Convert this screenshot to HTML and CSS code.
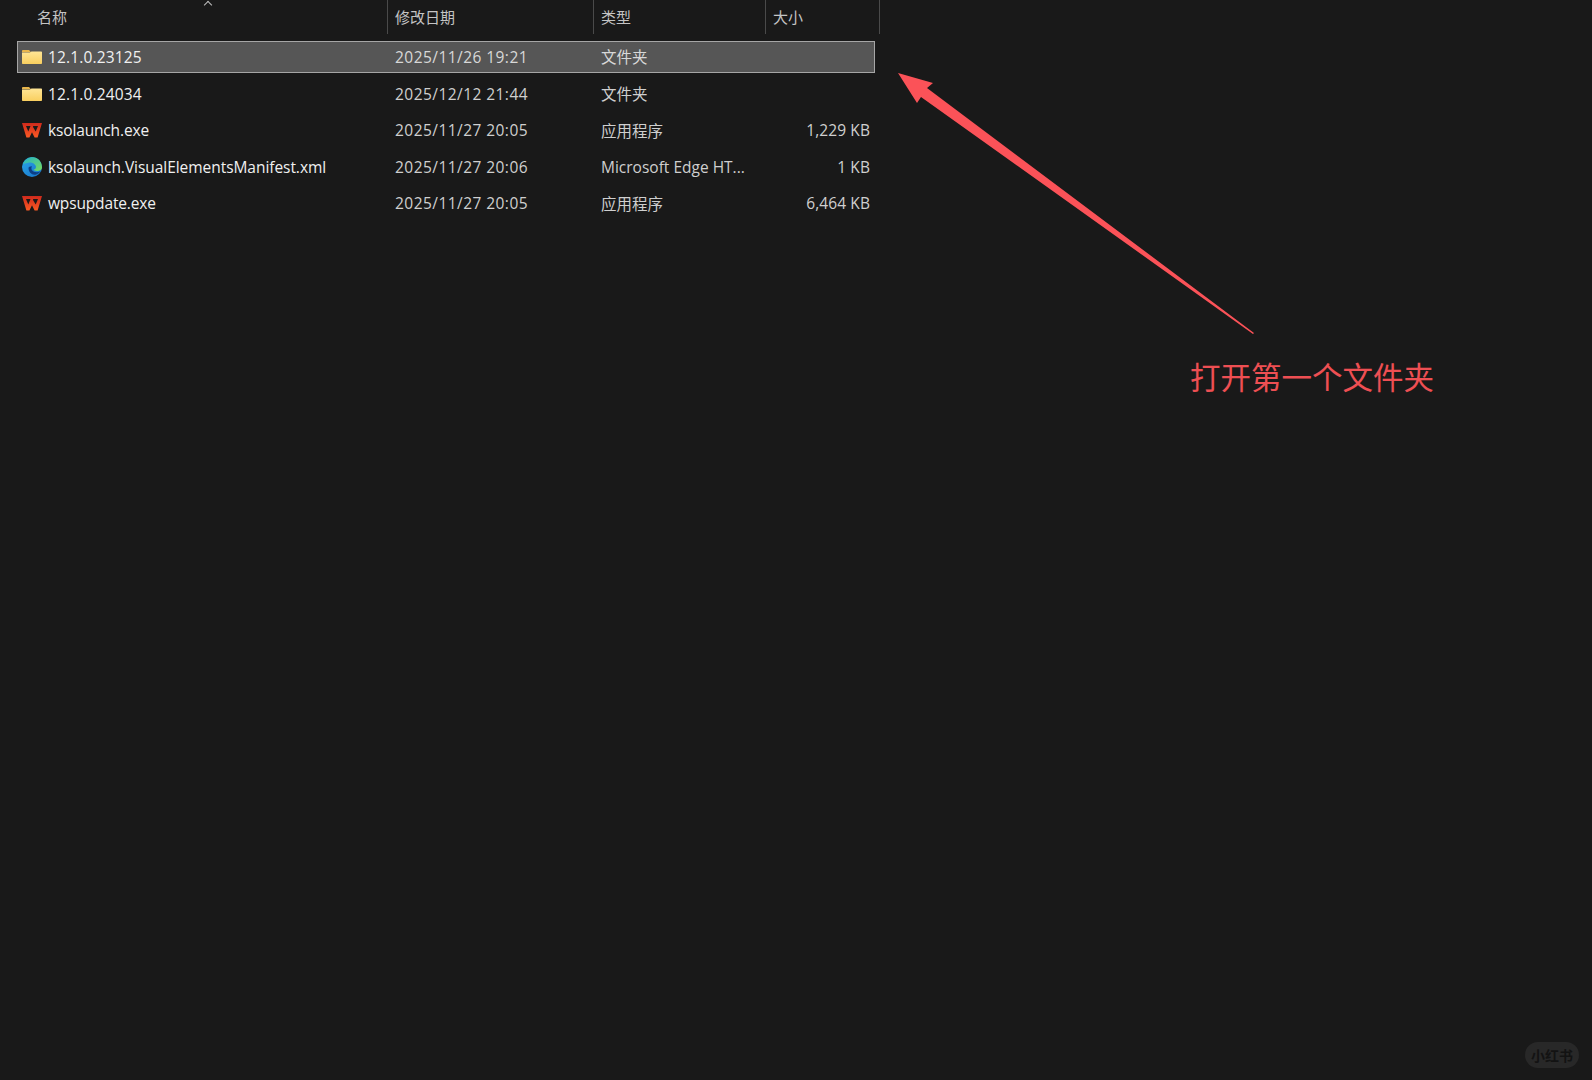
FILE: index.html
```html
<!DOCTYPE html>
<html lang="zh-CN">
<head>
<meta charset="utf-8">
<title>文件列表</title>
<link rel="stylesheet" href="styles.css">
</head>
<body>
<svg width="0" height="0" class="defs">
  <defs>
    <linearGradient id="fold" x1="0" y1="0" x2="0" y2="1"><stop offset="0" stop-color="#ffe595"/><stop offset="1" stop-color="#f9cf5f"/></linearGradient>
    <linearGradient id="wps" x1="0" y1="0" x2="0" y2="1"><stop offset="0" stop-color="#cf2a1c"/><stop offset="1" stop-color="#fb5a24"/></linearGradient>
    <linearGradient id="edge1" x1="0" y1="0" x2="1" y2="1"><stop offset="0" stop-color="#2aa6e8"/><stop offset="1" stop-color="#1672c8"/></linearGradient>
    <linearGradient id="edge2" x1="0" y1="0" x2="1" y2="1"><stop offset="0" stop-color="#22b4c8"/><stop offset="1" stop-color="#78dc5c"/></linearGradient>
    <symbol id="i-folder" viewBox="0 0 20 20">
      <path d="M0 4.2C0 3.5.5 3 1.200 3H7l2 2.200H0z" fill="#e9b64c"/>
      <path d="M0 5.500H7.800L9.500 4.600H19c.6 0 1 .4 1 1V16c0 .6-.4 1-1 1H1c-.6 0-1-.4-1-1z" fill="url(#fold)"/>
    </symbol>
    <symbol id="i-wps" viewBox="0 0 20 20">
      <path d="M0 3H20L15.600 17.500H12.600L10 12.300 7.400 17.500H4.400z" fill="url(#wps)"/>
      <path d="M4 6H8.500L6.300 11.500zM11.200 6H16L13.700 11.500 11 7z" fill="#191919"/>
    </symbol>
    <symbol id="i-edge" viewBox="0 0 20 20">
      <circle cx="10" cy="10" r="10" fill="url(#edge1)"/>
      <path d="M1 7C3 1.800 8 -.5 12.500 .4 17 1.500 20 5.500 20 10.500c0 2.500-2.500 3.500-5 3.500-2 0-3-.5-3.500-1.200 2-.6 2.800-2.200 2.300-3.700C13 6.500 10 5 7 5.500 4.500 6 2.500 6.800 1 7z" fill="url(#edge2)"/>
      <path d="M6.500 11c0 4 3.500 7.500 7.500 6.500 1.800-.5 3.500-1.700 4.500-3.200-3 1.500-7 1-8.500-1-.8-1-.8-2.800 0-4-2 .2-3.500 .7-3.500 1.700z" fill="#0c3f86"/>
    </symbol>
  </defs>
</svg>

<main class="explorer">
  <header class="head">
    <div class="hcell hname">名称<span class="sort"></span></div>
    <div class="hcell hdate">修改日期</div>
    <div class="hcell htype">类型</div>
    <div class="hcell hsize">大小</div>
  </header>
  <section class="list">
    <div class="row selected">
      <div class="name"><svg class="ico"><use href="#i-folder"/></svg><span class="ver">12.1.0.23125</span></div>
      <div class="cell date">2025/11/26 19:21</div><div class="cell">文件夹</div><div class="cell size"></div>
    </div>
    <div class="row">
      <div class="name"><svg class="ico"><use href="#i-folder"/></svg><span class="ver">12.1.0.24034</span></div>
      <div class="cell date">2025/12/12 21:44</div><div class="cell">文件夹</div><div class="cell size"></div>
    </div>
    <div class="row">
      <div class="name"><svg class="ico"><use href="#i-wps"/></svg><span class="exe">ksolaunch.exe</span></div>
      <div class="cell date">2025/11/27 20:05</div><div class="cell">应用程序</div><div class="cell size">1,229 KB</div>
    </div>
    <div class="row">
      <div class="name"><svg class="ico"><use href="#i-edge"/></svg><span>ksolaunch.VisualElementsManifest.xml</span></div>
      <div class="cell date">2025/11/27 20:06</div><div class="cell">Microsoft Edge HT...</div><div class="cell size">1 KB</div>
    </div>
    <div class="row">
      <div class="name"><svg class="ico"><use href="#i-wps"/></svg><span class="exe">wpsupdate.exe</span></div>
      <div class="cell date">2025/11/27 20:05</div><div class="cell">应用程序</div><div class="cell size">6,464 KB</div>
    </div>
  </section>
</main>

<svg class="arrow" width="1592" height="400" viewBox="0 0 1592 400">
  <path d="M898 73L933 83 927 88 1254 333 1253 334 921 97 917 103z" fill="#fb5258"/>
</svg>
<div class="note">打开第一个文件夹</div>
<div class="mark">小红书</div>
</body>
</html>
```
FILE: styles.css
```css
* { box-sizing: border-box; }
html, body { margin: 0; height: 100%; }
body {
  width: 1592px;
  height: 1080px;
  overflow: hidden;
  position: relative;
  background: #191919;
  color: #e4e4e4;
  font-family: "Open Sans", "Noto Sans CJK SC", sans-serif;
  font-size: 15.5px;
}
.defs { position: absolute; }
.explorer { width: 880px; }
.head {
  display: grid;
  grid-template-columns: 388px 206px 172px 114px;
  height: 34px;
  color: #c4c4c4;
  font-size: 15px;
}
.hcell {
  position: relative;
  display: flex;
  align-items: center;
  padding-left: 7px;
  padding-bottom: 1px;
  border-right: 1px solid #4a4a4a;
}
.hname { padding-left: 37px; }
.sort {
  position: absolute;
  left: 205px;
  top: 2px;
  width: 6px;
  height: 6px;
  border-left: 1px solid #bdbdbd;
  border-top: 1px solid #bdbdbd;
  transform: rotate(45deg);
}
.list {
  display: flex;
  flex-direction: column;
  margin: 7px 0 0 17px;
  width: 858px;
}
.row {
  display: grid;
  grid-template-columns: 370px 206px 172px 105px;
  align-items: center;
  height: 36.500px;
  color: #cfcfcf;
}
.row.selected {
  height: 31.500px;
  margin-bottom: 5px;
  background: #565656;
  box-shadow: inset 0 0 0 1px #a6a6a6;
  color: #d8d8d8;
}
.row:not(.selected) { position: relative; top: -2px; }
.name {
  display: flex;
  align-items: center;
  gap: 6px;
  padding-left: 5px;
  color: #f0f0f0;
  white-space: nowrap;
  letter-spacing: -0.05px;
}
.ver { letter-spacing: 0.15px; }
.exe { letter-spacing: -0.15px; }
.ico { width: 20px; height: 20px; flex: none; }
.cell { padding-left: 8px; white-space: nowrap; }
.date { letter-spacing: 0.45px; }
.size { text-align: right; padding: 0; letter-spacing: 0.1px; }
.arrow { position: absolute; left: 0; top: 0; }
.note {
  position: absolute;
  left: 1190px;
  top: 355px;
  color: #ee4f53;
  font-family: "Noto Sans CJK SC", sans-serif;
  font-size: 30.500px;
  line-height: 42px;
}
.mark {
  position: absolute;
  left: 1525px;
  top: 1042px;
  width: 54px;
  height: 26px;
  border-radius: 13px;
  background: #282828;
  color: #131313;
  font-family: "Noto Sans CJK SC", sans-serif;
  font-weight: 700;
  font-size: 14px;
  line-height: 26px;
  text-align: center;
}
```
